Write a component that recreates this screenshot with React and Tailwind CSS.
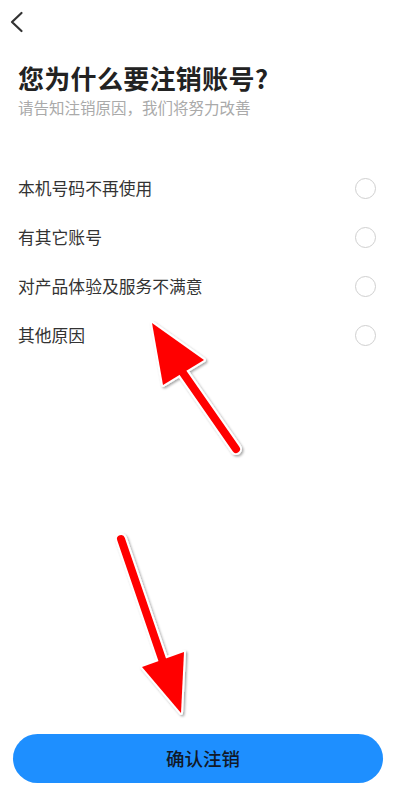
import React, { useState } from 'react';

const reasons = ['本机号码不再使用', '有其它账号', '对产品体验及服务不满意', '其他原因'];

// red annotation arrows drawn over the page
const Arrows = () => (
  <svg className="absolute inset-0 pointer-events-none" width="396" height="791" viewBox="0 0 396 791">
    <defs>
      <filter id="sh" x="-20%" y="-20%" width="140%" height="140%">
        <feDropShadow dx="1.5" dy="1.5" stdDeviation="1.2" floodColor="#000" floodOpacity="0.35" />
      </filter>
    </defs>
    <g filter="url(#sh)">
      <line x1="236" y1="449" x2="181" y2="370" stroke="#fff" strokeWidth="12" strokeLinecap="round" />
      <polygon points="152,323 204,360 163,385" fill="#fff" stroke="#fff" strokeWidth="4" strokeLinejoin="round" />
      <line x1="121" y1="539" x2="163" y2="662" stroke="#fff" strokeWidth="12" strokeLinecap="round" />
      <polygon points="181,713 142,667 184,652" fill="#fff" stroke="#fff" strokeWidth="4" strokeLinejoin="round" />
    </g>
    <line x1="236" y1="449" x2="181" y2="370" stroke="#ff0000" strokeWidth="8" strokeLinecap="round" />
    <polygon points="152,323 204,360 163,385" fill="#ff0000" />
    <line x1="121" y1="539" x2="163" y2="662" stroke="#ff0000" strokeWidth="8" strokeLinecap="round" />
    <polygon points="181,713 142,667 184,652" fill="#ff0000" />
  </svg>
);

export default function App() {
  const [picked, setPicked] = useState(null);

  return (
    <div
      className="relative h-screen w-full bg-white flex flex-col overflow-hidden"
      style={{ fontFamily: '"Noto Sans CJK SC", "Noto Sans", sans-serif' }}
    >
      {/* header */}
      <div className="h-[44px] flex items-center pl-[5px]">
        <svg width="24" height="24" viewBox="0 0 24 24" fill="none" stroke="#333" strokeWidth="2.2" strokeLinecap="round" strokeLinejoin="round">
          <polyline points="16.5,3 7,12 16.5,21" />
        </svg>
      </div>

      <div className="px-[18px] pt-[17px]">
        <h1 className="text-[26px] leading-[34px] font-bold text-[#222] tracking-[0.3px]">您为什么要注销账号?</h1>
        <p className="text-[15.5px] leading-[20px] text-[#aaa] mt-[2px]">请告知注销原因，我们将努力改善</p>
      </div>

      <ul className="mt-[47px]">
        {reasons.map((r, i) => (
          <li
            key={r}
            onClick={() => setPicked(i)}
            className="h-[49px] flex items-center justify-between pl-[18px] pr-[20px]"
          >
            <span className="text-[16.8px] text-[#333]">{r}</span>
            <span className={`w-[21px] h-[21px] rounded-full border-[1.5px] ${picked === i ? 'border-[#1e8fff] bg-[#1e8fff]' : 'border-[#d0d0d0]'}`} />
          </li>
        ))}
      </ul>

      <div className="flex-1" />

      <div className="px-[13px] pb-[8px]">
        <button className="w-full h-[49px] rounded-full bg-[#1e8fff] text-[#111827] text-[18.5px] font-medium pl-[10px]">确认注销</button>
      </div>

      <Arrows />
    </div>
  );
}
